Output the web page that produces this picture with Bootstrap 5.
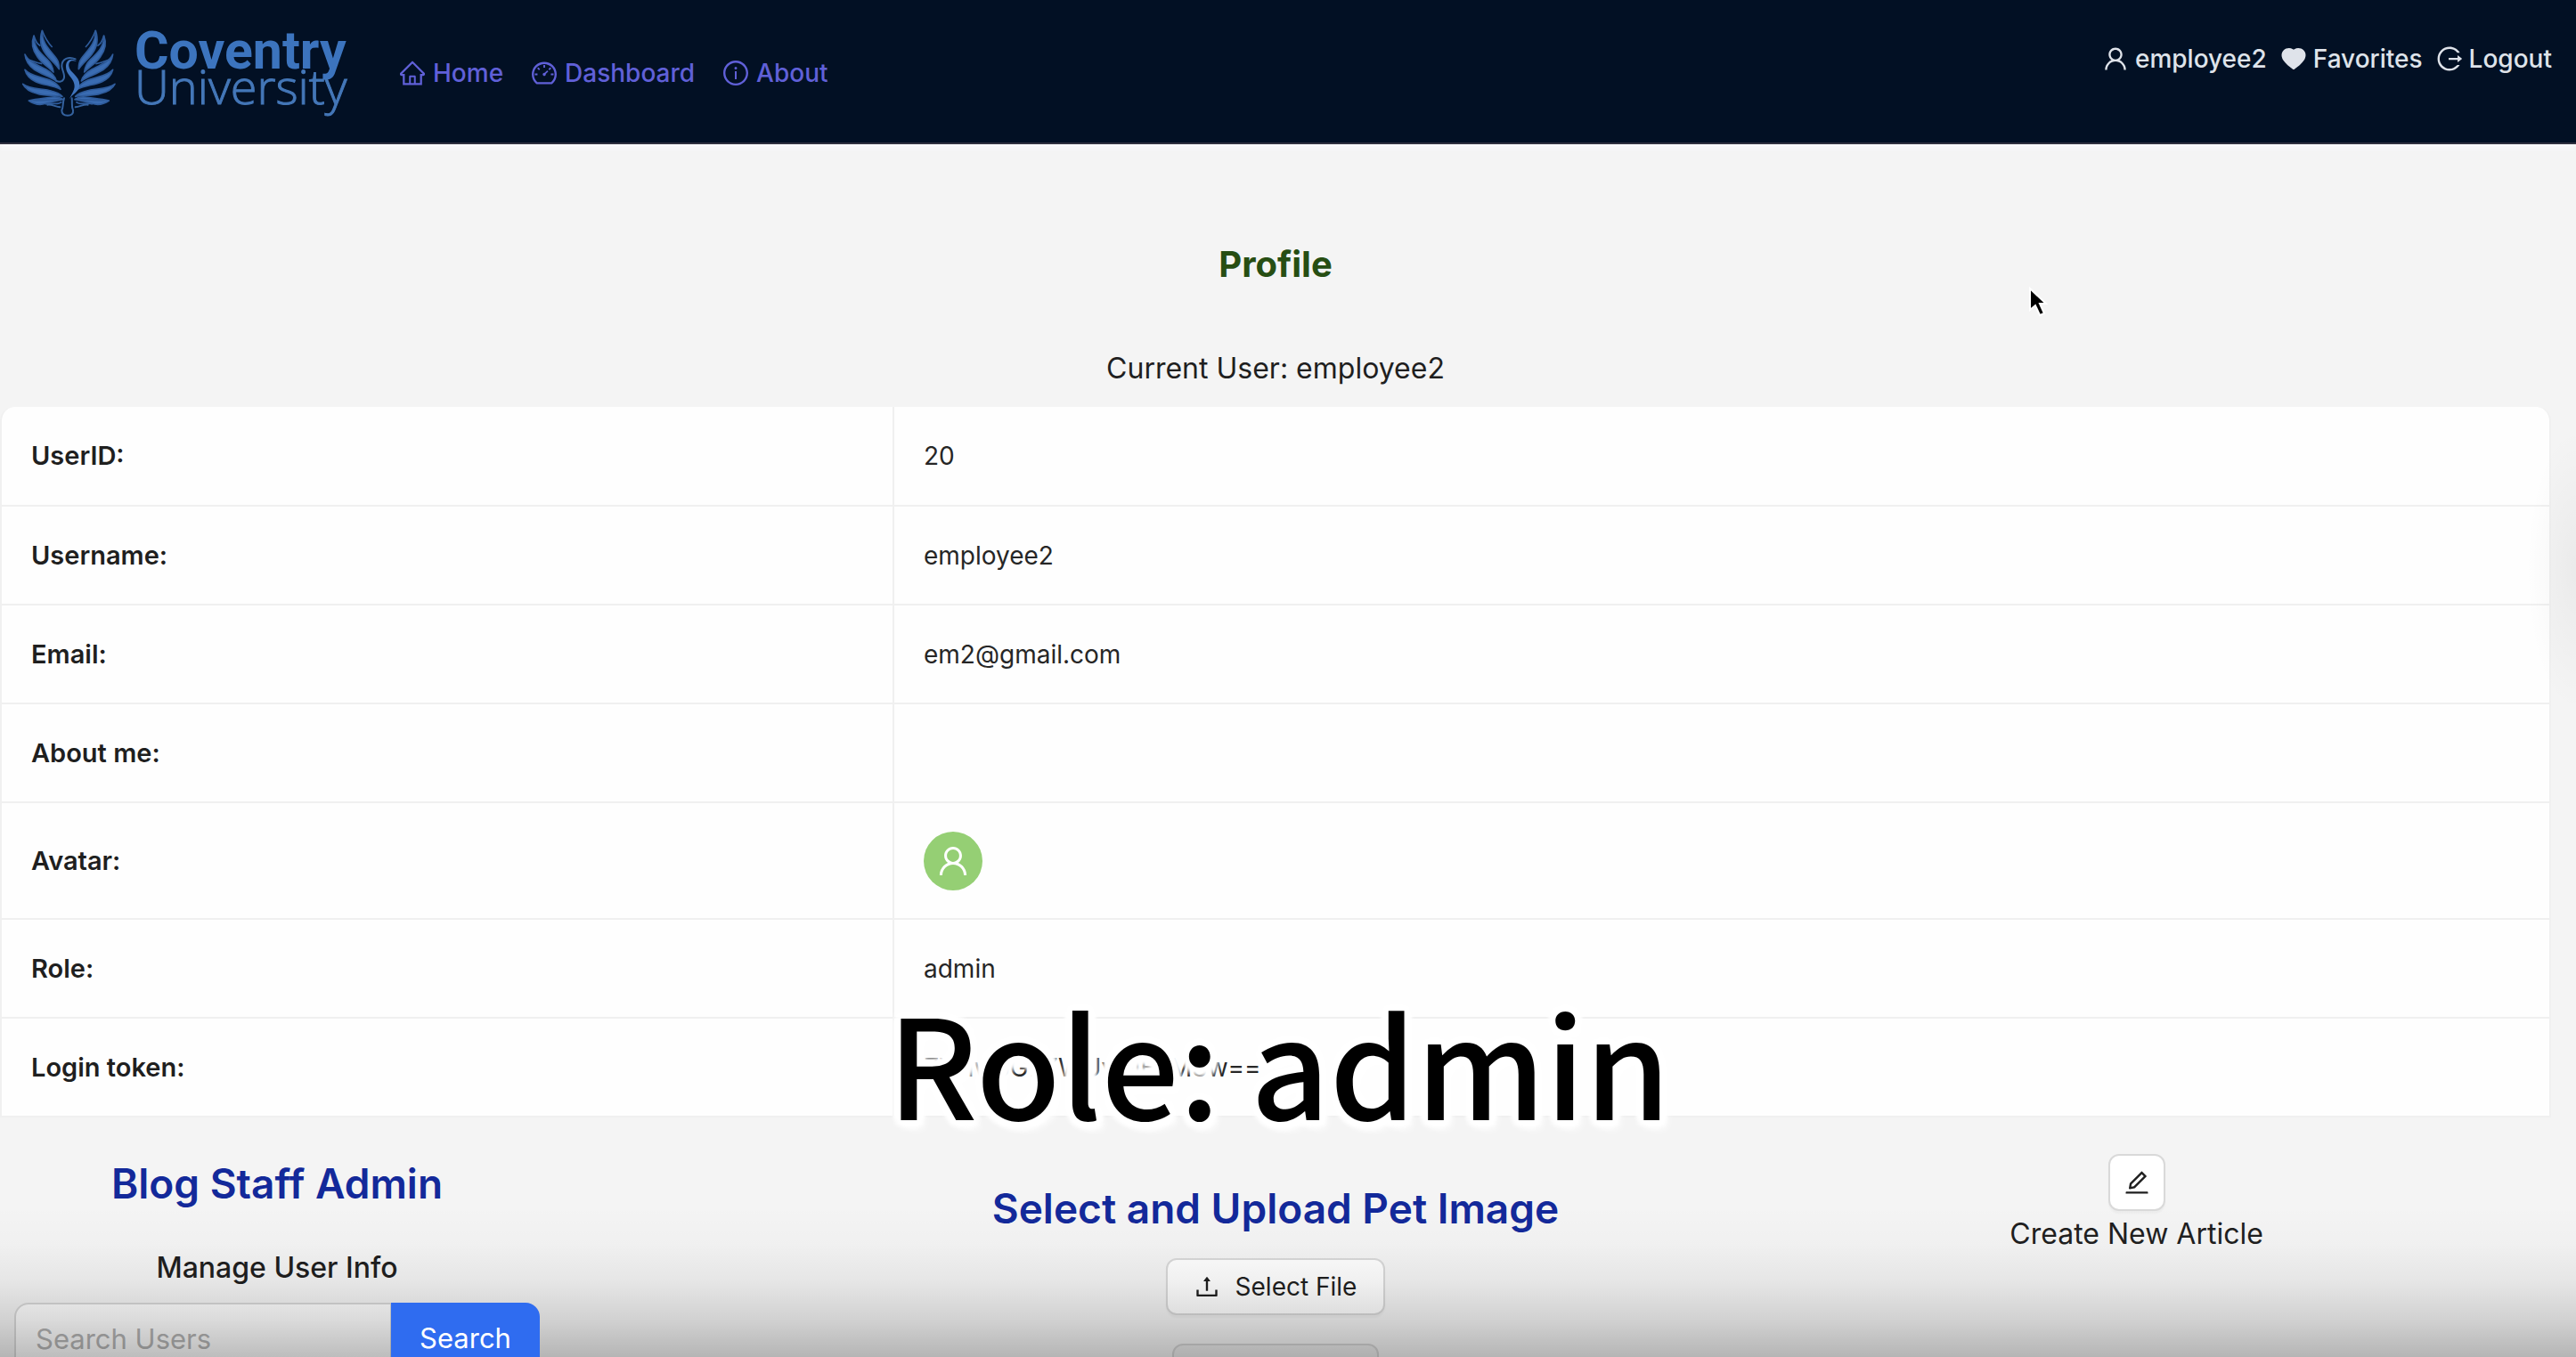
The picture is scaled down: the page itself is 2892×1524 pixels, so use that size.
<!DOCTYPE html>
<html lang="en">
<head>
<meta charset="utf-8">
<meta name="viewport" content="width=device-width, initial-scale=1">
<title>Profile</title>
<link href="https://cdn.jsdelivr.net/npm/bootstrap@5.3.0/dist/css/bootstrap.min.css" rel="stylesheet">
<style>
  body { background: #f4f4f4; font-family: Inter, "Liberation Sans", sans-serif; font-size: 28px; color: #1f1f1f; }
  .page-shell { height: 100vh; overflow: hidden; position: relative; }
  .ico { width: 28px; height: 28px; fill: currentColor; flex: none; }
  .site-bar { background: #021024; border-bottom: 2px solid #30303f; padding: 0 27px 0 24px; height: 162px; box-shadow: 0 4px 6px #fafafc; }
  .brand-logo { width: 372px; height: 110px; }
  .site-bar a { font-weight: 500; line-height: 40px; text-decoration: none; }
  .main-links { gap: 32px; margin-left: 53px; padding-top: 4px; }
  .main-links a { color: #6060d8; gap: 9px; }
  .user-links { gap: 16px; padding-top: 46px; }
  .user-links a { color: #dfe3ea; gap: 8px; }
  .page-body { padding-right: 28px; }
  .page-title { font-size: 40px; font-weight: 700; line-height: 56px; color: #274e13; margin: 107px 0 64px; }
  .current-user { font-size: 32px; line-height: 50px; margin-bottom: 18px; }
  .info-box { background: #fefefe; border: 2px solid #f0f0f0; border-width: 0 2px; border-radius: 16px 16px 0 0; overflow: hidden; }
  .info-table { --bs-table-bg: transparent; table-layout: fixed; margin: 0; color: #262626; }
  .info-table th, .info-table td { height: 111px; padding: 0 33px; vertical-align: middle; border-bottom: 2px solid #f0f0f0; color: inherit; }
  .info-table th { width: 35%; font-size: 29px; font-weight: 600; color: #1f1f1f; border-right: 2px solid #f0f0f0; }
  .info-table .tall-row > * { height: 131px; }
  .user-pic { width: 66px; height: 66px; background: #95cf74; color: #fff; }
  .user-pic svg { width: 36px; height: 36px; fill: currentColor; }
  .tool-col-side { flex: 0 0 32.5%; }
  .tool-col-mid { flex: 1 1 0; padding-top: 74px; }
  .staff-panel { width: 624px; padding: 46px 18px 0 16px; }
  .panel-title { font-size: 46px; font-weight: 600; line-height: 56px; color: #13299a; margin: 0; }
  .panel-sub { font-size: 32px; font-weight: 500; line-height: 48px; margin: 43px 0 15px; }
  .search-field { height: 80px; font-size: 31px; padding: 0 22px; border: 2px solid #d9d9d9; border-radius: 16px 0 0 16px; color: #1f1f1f; }
  .search-field::placeholder { color: #b5b5b5; opacity: 1; }
  .search-go { width: 167px; font-size: 31px; background: #2f6cf0; color: #fff; border: 0; border-radius: 0 16px 16px 0; }
  .plain-btn { height: 64px; font-size: 28px; line-height: 40px; background: #fff; border: 2px solid #d9d9d9; border-radius: 12px; color: #1f1f1f; box-shadow: 0 3px 2px rgba(0,0,0,.03); padding: 0 30px; gap: 18px; }
  .upload-btn { width: 232px; background: #ececec; border-color: #d4d4d4; margin-top: 32px; }
  .edit-btn { width: 64px; padding: 0; }
  .article-tool { padding-top: 41px; }
  .article-label { font-size: 32px; line-height: 52px; }
  .caption-overlay { left: 0; right: 20px; top: 1114px; font: 500 154px/154px "Noto Sans CJK SC", sans-serif; color: #000; text-align: center; pointer-events: none;
    text-shadow: 0 0 4px #fff, 0 0 6px #fff, 8px 0 4px #fff, -8px 0 4px #fff, 6px 6px 5px #fff, -6px 6px 5px #fff, 6px -6px 5px #fff, -6px -6px 5px #fff, 0 -8px 4px #fff, 0 9px 6px #fff, 8px 9px 8px #fff; }
  .bottom-shade { left: 0; right: 0; bottom: 0; height: 170px; pointer-events: none;
    background: linear-gradient(to bottom, rgba(0,0,0,0), rgba(0,0,0,.015) 25%, rgba(0,0,0,.06) 50%, rgba(0,0,0,.14) 75%, rgba(0,0,0,.26)); }
  .edge-shade { right: 0; top: 480px; width: 56px; height: 320px; pointer-events: none; background: radial-gradient(ellipse at right center, rgba(0,0,0,.04), rgba(0,0,0,0) 70%); }
  .pointer-mark { left: 2276px; top: 320px; width: 26px; height: 38px; pointer-events: none; }
</style>
</head>
<body>
<div class="page-shell">
  <header class="site-bar d-flex justify-content-between">
    <div class="d-flex align-items-center">
      <a href="#" class="d-flex" aria-label="Coventry University">
        <svg class="brand-logo" viewBox="24 25 372 110" role="img" aria-label="Coventry University">
          <g transform="translate(14 25) scale(.3333)">
            <g id="wing" fill="#3a6cb2" stroke="#2f5c9c" stroke-width="5" stroke-linejoin="round">
              <path d="M100 28C98 72 128 95 148 122C158 136 157 146 157 158C144 138 128 128 113 108C94 84 91 55 100 28Z"/>
              <path d="M72 45C70 82 94 104 118 126C132 140 136 152 138 168C122 150 100 140 84 116C66 92 64 66 72 45Z"/>
              <path d="M42 108C54 134 88 146 112 158C130 168 144 180 148 198C126 182 98 176 74 160C54 146 44 128 42 108Z"/>
              <path d="M42 160C62 184 102 184 128 196C146 204 156 214 162 226C134 212 104 212 78 200C56 190 46 176 42 160Z"/>
              <path d="M35 208C60 228 104 222 132 232C148 236 160 242 168 250C138 244 110 250 82 240C58 234 42 222 35 208Z"/>
              <path d="M55 264C84 258 110 256 134 252C150 250 162 254 170 260C150 264 132 268 112 274C92 280 72 276 55 264Z"/>
              <path d="M100 28C112 60 122 72 134 84M72 45C80 70 84 72 94 80M54 130C50 120 70 136 100 140M70 264C100 262 130 262 160 260M110 276C130 268 150 282 166 268" fill="none"/>
            </g>
            <use href="#wing" transform="matrix(-1 0 0 1 380 0)"/>
            <path d="M216 132C200 126 188 130 190 148C192 170 226 180 226 210C226 234 204 240 192 258C202 236 212 226 208 208C204 186 180 176 180 150C180 128 196 118 216 132Z" fill="#3f74bd"/>
            <path d="M212 124C190 114 166 122 166 148C168 166 180 180 172 192C168 200 158 202 148 198M174 256C168 276 172 286 166 296C166 310 176 314 186 314C198 314 206 308 204 296C198 284 202 274 200 256M160 286C144 284 132 276 118 278M212 286C228 284 240 276 254 278" fill="none" stroke="#34629f" stroke-width="6" stroke-linecap="round"/>
          </g>
          <text x="151" y="77" font-family="Roboto, sans-serif" font-weight="700" font-size="59" fill="#3c74be">Coventry</text>
          <text x="151" y="117" font-family="Open Sans, sans-serif" font-weight="300" font-size="54" fill="#4477b8" stroke="#4477b8" stroke-width="1">University</text>
        </svg>
      </a>
      <nav class="main-links d-flex">
        <a href="#" class="d-flex align-items-center"><svg class="ico" viewBox="64 64 896 896"><path d="M946.5 505L560.1 118.8l-25.9-25.9a31.5 31.5 0 00-44.4 0L77.5 505a63.9 63.9 0 00-18.8 46c.4 35.2 29.7 63.3 64.9 63.3h42.5V940h691.8V614.3h43.4c17.1 0 33.2-6.7 45.3-18.8a63.6 63.6 0 0018.7-45.3c0-17-6.7-33.1-18.8-45.2zM568 868H456V664h112v204zm217.9-325.7V868H632V640c0-22.1-17.9-40-40-40H432c-22.1 0-40 17.9-40 40v228H238.1V542.3h-96l370-369.7 23.1 23.1L882 542.3h-96.1z"/></svg>Home</a>
        <a href="#" class="d-flex align-items-center"><svg class="ico" viewBox="64 64 896 896"><path d="M924.8 385.6a446.7 446.7 0 00-96-142.4 446.7 446.7 0 00-142.4-96C631.1 123.8 572.5 112 512 112s-119.1 11.8-174.4 35.2a446.7 446.7 0 00-142.4 96 446.7 446.7 0 00-96 142.4C75.8 440.9 64 499.5 64 560c0 132.7 58.3 257.7 159.9 343.1l1.7 1.4c5.8 4.8 13.1 7.5 20.6 7.5h531.7c7.5 0 14.8-2.7 20.6-7.5l1.7-1.4C901.7 817.7 960 692.7 960 560c0-60.5-11.9-119.1-35.2-174.4zM761.4 836H262.6A371.12 371.12 0 01140 560c0-99.4 38.7-192.8 109-263 70.3-70.3 163.7-109 263-109 99.4 0 192.8 38.7 263 109 70.3 70.3 109 163.7 109 263 0 105.6-44.5 205.5-122.6 276zM623.5 421.5a8.03 8.03 0 00-11.3 0L527.7 506c-18.7-5-39.4-.2-54.1 14.5a55.95 55.95 0 000 79.2 55.95 55.95 0 0079.2 0 55.87 55.87 0 0014.5-54.1l84.5-84.5c3.1-3.1 3.1-8.2 0-11.3l-28.3-28.3zM490 320h44c4.4 0 8-3.6 8-8v-80c0-4.4-3.6-8-8-8h-44c-4.4 0-8 3.6-8 8v80c0 4.4 3.6 8 8 8zm260 218v44c0 4.4 3.6 8 8 8h80c4.4 0 8-3.6 8-8v-44c0-4.4-3.6-8-8-8h-80c-4.4 0-8 3.6-8 8zm12.7-197.2l-31.1-31.1a8.03 8.03 0 00-11.3 0l-56.6 56.6a8.03 8.03 0 000 11.3l31.1 31.1c3.1 3.1 8.2 3.1 11.3 0l56.6-56.6c3.1-3.1 3.1-8.2 0-11.3zm-458.6-31.1a8.03 8.03 0 00-11.3 0l-31.1 31.1a8.03 8.03 0 000 11.3l56.6 56.6c3.1 3.1 8.2 3.1 11.3 0l31.1-31.1c3.1-3.1 3.1-8.2 0-11.3l-56.6-56.6zM262 530h-80c-4.4 0-8 3.6-8 8v44c0 4.4 3.6 8 8 8h80c4.4 0 8-3.6 8-8v-44c0-4.4-3.6-8-8-8z"/></svg>Dashboard</a>
        <a href="#" class="d-flex align-items-center"><svg class="ico" viewBox="64 64 896 896"><path d="M512 64C264.6 64 64 264.6 64 512s200.6 448 448 448 448-200.6 448-448S759.4 64 512 64zm0 820c-205.4 0-372-166.6-372-372s166.6-372 372-372 372 166.6 372 372-166.6 372-372 372z"/><path d="M464 336a48 48 0 1096 0 48 48 0 10-96 0zm72 112h-48c-4.4 0-8 3.6-8 8v272c0 4.4 3.6 8 8 8h48c4.4 0 8-3.6 8-8V456c0-4.4-3.6-8-8-8z"/></svg>About</a>
      </nav>
    </div>
    <nav class="user-links d-flex align-items-start">
      <a href="#" class="d-flex align-items-center"><svg class="ico" viewBox="64 64 896 896"><path id="person" d="M858.5 763.6a374 374 0 00-80.6-119.5 375.63 375.63 0 00-119.5-80.6c-.4-.2-.8-.3-1.2-.5C719.5 518 760 444.7 760 362c0-137-111-248-248-248S264 225 264 362c0 82.7 40.5 156 102.8 201.1-.4.2-.8.3-1.2.5-44.8 18.9-85 46-119.5 80.6a375.63 375.63 0 00-80.6 119.5A371.7 371.7 0 00136 901.8a8 8 0 008 8.2h60c4.4 0 7.9-3.5 8-7.8 2-77.2 33-149.5 87.8-204.3 56.7-56.7 132-87.9 212.2-87.9s155.5 31.2 212.2 87.9C779 752.7 810 825 812 902.2c.1 4.4 3.6 7.8 8 7.8h60a8 8 0 008-8.2c-1-47.8-10.9-94.3-29.5-138.2zM512 534c-45.9 0-89.1-17.9-121.6-50.4S340 407.9 340 362c0-45.9 17.9-89.1 50.4-121.6S466.1 190 512 190s89.1 17.9 121.6 50.4S684 316.1 684 362c0 45.9-17.9 89.1-50.4 121.6S557.9 534 512 534z"/></svg>employee2</a>
      <a href="#" class="d-flex align-items-center"><svg class="ico" viewBox="64 64 896 896"><path d="M923 283.6a260.04 260.04 0 00-56.9-82.8 264.4 264.4 0 00-84-55.5A265.34 265.34 0 00679.7 125c-49.3 0-97.4 13.5-139.2 39-10 6.1-19.5 12.8-28.5 20.1-9-7.3-18.5-14-28.5-20.1-41.8-25.5-89.9-39-139.2-39-35.5 0-69.9 6.8-102.4 20.3-31.4 13-59.7 31.7-84 55.5a258.44 258.44 0 00-56.9 82.8c-13.9 32.3-21 66.6-21 101.9 0 33.3 6.8 68 20.3 103.3 11.3 29.5 27.5 60.1 48.2 91 32.8 48.9 77.9 99.9 133.9 151.6 92.8 85.7 184.7 144.9 188.6 147.3l23.7 15.2c10.5 6.7 24 6.7 34.5 0l23.7-15.2c3.9-2.5 95.7-61.6 188.6-147.3 56-51.7 101.1-102.7 133.9-151.6 20.7-30.9 37-61.5 48.2-91 13.5-35.3 20.3-70 20.3-103.3.1-35.3-7-69.6-20.9-101.9z"/></svg>Favorites</a>
      <a href="#" class="d-flex align-items-center"><svg class="ico" viewBox="64 64 896 896"><path d="M868 732h-70.3c-4.8 0-9.3 2.1-12.3 5.8-7 8.5-14.5 16.7-22.4 24.5a353.84 353.84 0 01-112.7 75.9A352.8 352.8 0 01512.4 866c-47.9 0-94.3-9.4-137.9-27.8a353.84 353.84 0 01-112.7-75.9 353.28 353.28 0 01-76-112.5C167.3 606.2 158 559.9 158 512s9.4-94.2 27.8-137.8c17.8-42.1 43.4-80 76-112.5s70.5-58.1 112.7-75.9c43.6-18.4 90-27.8 137.9-27.8 47.9 0 94.3 9.3 137.9 27.8 42.2 17.8 80.1 43.4 112.7 75.9 7.9 7.9 15.3 16.1 22.4 24.5 3 3.7 7.6 5.8 12.3 5.8H868c6.3 0 10.2-7 6.7-12.3C798 160.5 663.8 81.6 511.3 82 271.7 82.6 79.6 277.1 82 516.4 84.4 751.9 276.2 942 512.4 942c152.1 0 285.7-78.8 362.3-197.7 3.4-5.3-.4-12.3-6.7-12.3zm88.9-226.3L815 393.7c-5.3-4.2-13-.4-13 6.3v76H488c-4.4 0-8 3.6-8 8v56c0 4.4 3.6 8 8 8h314v76c0 6.7 7.8 10.5 13 6.3l141.9-112a8 8 0 000-12.6z"/></svg>Logout</a>
    </nav>
  </header>

  <main class="page-body">
    <h1 class="page-title text-center">Profile</h1>
    <p class="current-user text-center">Current User: employee2</p>

    <div class="info-box">
      <table class="table info-table">
        <tbody>
          <tr><th scope="row">UserID:</th><td>20</td></tr>
          <tr><th scope="row">Username:</th><td>employee2</td></tr>
          <tr><th scope="row">Email:</th><td>em2@gmail.com</td></tr>
          <tr><th scope="row">About me:</th><td></td></tr>
          <tr class="tall-row"><th scope="row">Avatar:</th><td><span class="user-pic rounded-circle d-flex align-items-center justify-content-center"><svg viewBox="64 64 896 896"><use href="#person"/></svg></span></td></tr>
          <tr><th scope="row">Role:</th><td>admin</td></tr>
          <tr><th scope="row">Login token:</th><td>ZW1wbG7ZWUyOjEyM3w==</td></tr>
        </tbody>
      </table>
    </div>

    <section class="d-flex align-items-start text-center">
      <div class="tool-col-side">
        <div class="staff-panel">
          <h2 class="panel-title">Blog Staff Admin</h2>
          <h3 class="panel-sub">Manage User Info</h3>
          <form class="input-group">
            <input type="text" class="form-control search-field" placeholder="Search Users" aria-label="Search Users">
            <button type="button" class="btn search-go">Search</button>
          </form>
        </div>
      </div>
      <div class="tool-col-mid d-flex flex-column align-items-center">
        <h2 class="panel-title mb-4 pb-1">Select and Upload Pet Image</h2>
        <button type="button" class="btn plain-btn d-flex align-items-center"><svg class="ico" viewBox="64 64 896 896"><path d="M400 317.7h73.9V656c0 4.4 3.6 8 8 8h60c4.4 0 8-3.6 8-8V317.7H624c6.7 0 10.4-7.7 6.3-12.9L518.3 163a8 8 0 00-12.6 0l-112 141.7c-4.1 5.3-.4 13 6.3 13zM878 626h-60c-4.4 0-8 3.6-8 8v154H214V634c0-4.4-3.6-8-8-8h-60c-4.4 0-8 3.6-8 8v198c0 17.7 14.3 32 32 32h684c17.7 0 32-14.3 32-32V634c0-4.4-3.6-8-8-8z"/></svg>Select File</button>
        <button type="button" class="btn plain-btn upload-btn" aria-label="Upload"></button>
      </div>
      <div class="tool-col-side article-tool d-flex flex-column align-items-center">
        <button type="button" id="new-article" class="btn plain-btn edit-btn d-flex align-items-center justify-content-center" aria-labelledby="new-article-label"><svg class="ico" viewBox="64 64 896 896"><path d="M257.7 752c2 0 4-.2 6-.5L431.9 722c2-.4 3.9-1.3 5.3-2.8l423.9-423.9a9.96 9.96 0 000-14.1L694.9 114.9c-1.9-1.9-4.4-2.9-7.1-2.9s-5.2 1-7.1 2.9L256.8 538.8c-1.5 1.5-2.4 3.3-2.8 5.3l-29.5 168.2a33.5 33.5 0 009.4 29.8c6.6 6.4 14.9 9.9 23.8 9.9zm67.4-174.4L687.8 215l73.3 73.3-362.7 362.6-88.9 15.7 15.6-89zM880 836H144c-17.7 0-32 14.3-32 32v36c0 4.4 3.6 8 8 8h784c4.4 0 8-3.6 8-8v-36c0-17.7-14.3-32-32-32z"/></svg></button>
        <label class="article-label" id="new-article-label" for="new-article">Create New Article</label>
      </div>
    </section>
  </main>

  <div class="bottom-shade position-absolute"></div>
  <div class="edge-shade position-absolute"></div>
  <div class="caption-overlay position-absolute">Role: admin</div>
  <svg class="pointer-mark position-absolute" viewBox="0 0 26 38"><path d="M3 4V28L9 23L14 34L19 32L14 21H21Z" fill="#000" stroke="#fff" stroke-width="2"/></svg>
</div>
<script src="https://cdn.jsdelivr.net/npm/bootstrap@5.3.0/dist/js/bootstrap.bundle.min.js"></script>
</body>
</html>
